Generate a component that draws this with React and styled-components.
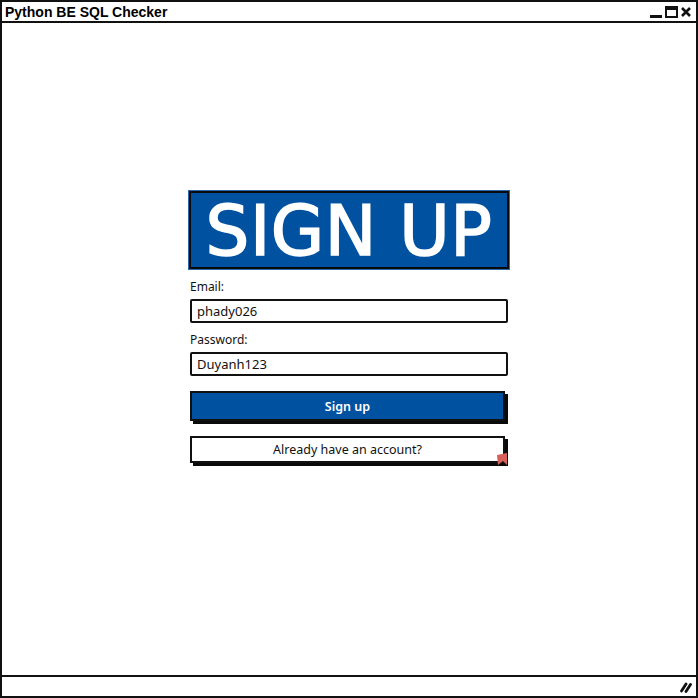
import React from "react";
import styled, { createGlobalStyle } from "styled-components";

const Global = createGlobalStyle`
  html, body {
    margin: 0;
    padding: 0;
    background: #fff;
  }
  * {
    box-sizing: border-box;
  }
`;

const Window = styled.div`
  width: 698px;
  height: 698px;
  border: 2px solid #111;
  display: flex;
  flex-direction: column;
  background: #fff;
`;

const TitleBar = styled.div`
  height: 21px;
  border-bottom: 2px solid #111;
  display: flex;
  align-items: center;
  justify-content: space-between;
  padding: 0 5px 0 3px;
  font-family: "Liberation Sans", Arial, sans-serif;
  font-weight: bold;
  font-size: 14px;
  color: #000;
`;

const Controls = styled.div`
  display: flex;
  align-items: center;
  gap: 3px;
  margin-top: 1px;
`;

const Content = styled.div`
  flex: 1;
  display: flex;
  flex-direction: column;
  align-items: center;
  padding-top: 168px;
`;

const Form = styled.div`
  width: 320px;
  display: flex;
  flex-direction: column;
  font-family: "Noto Sans", "Open Sans", sans-serif;
`;

const Banner = styled.div`
  height: 78px;
  background: #0052a0;
  border: 2px solid #0a0a0a;
  box-shadow: 0 0 0 1px #2a6ab0;
  display: flex;
  align-items: center;
  justify-content: center;
  color: #fff;
  font-family: "DejaVu Sans", sans-serif;
  font-size: 69px;
  letter-spacing: 0.5px;
  -webkit-text-stroke: 1.6px #fff;
  padding-top: 2px;
`;

const Label = styled.div`
  font-size: 12px;
  color: #111;
  height: 16px;
  line-height: 16px;
  margin: ${(p) => p.$top}px 0 4px 1px;
`;

const Field = styled.div`
  height: 24px;
  margin-left: 1px;
  margin-right: 1px;
  border: 2px solid #111;
  border-radius: 2px;
  display: flex;
  align-items: center;
  padding-left: 5px;
  font-size: 13px;
  color: #111;
`;

const Button = styled.div`
  position: relative;
  height: ${(p) => p.$h}px;
  margin: ${(p) => p.$top}px 4px 0 1px;
  border: 2px solid #111;
  background: ${(p) => (p.$primary ? "#0052a0" : "#fff")};
  color: ${(p) => (p.$primary ? "#fff" : "#111")};
  box-shadow: 3px 3px 0 #0a0a0a;
  display: flex;
  align-items: center;
  justify-content: center;
  font-size: 12.5px;
  font-weight: ${(p) => (p.$primary ? 600 : 400)};
`;

const LinkMark = styled.svg`
  position: absolute;
  right: -5px;
  bottom: -5px;
`;

const StatusBar = styled.div`
  height: 21px;
  border-top: 2px solid #111;
  display: flex;
  align-items: center;
  justify-content: flex-end;
  padding-right: 4px;
`;

export default function App() {
  return (
    <>
      <Global />
      <Window>
        <TitleBar>
          <span>Python BE SQL Checker</span>
          <Controls>
            <svg width="12" height="12" viewBox="0 0 12 12">
              <rect x="0" y="9" width="12" height="3" fill="#111" />
            </svg>
            <svg width="13" height="12" viewBox="0 0 13 12">
              <rect x="1" y="1" width="11" height="10" fill="none" stroke="#111" strokeWidth="2" />
              <rect x="1" y="1" width="11" height="3" fill="#111" />
            </svg>
            <svg width="10" height="10" viewBox="0 0 10 10">
              <path d="M1 1 L9 9 M9 1 L1 9" stroke="#111" strokeWidth="2.6" />
            </svg>
          </Controls>
        </TitleBar>
        <Content>
          <Form>
            <Banner>SIGN UP</Banner>
            <Label $top={10}>Email:</Label>
            <Field>phady026</Field>
            <Label $top={9}>Password:</Label>
            <Field>Duyanh123</Field>
            <Button $primary $h={30} $top={15}>
              Sign up
            </Button>
            <Button $h={27} $top={15}>
              Already have an account?
              <LinkMark width="12" height="13" viewBox="0 0 12 13">
                <path d="M1 2 L11 0 L11 12 L7 8 L2 12 Z" fill="#d9605a" />
              </LinkMark>
            </Button>
          </Form>
        </Content>
        <StatusBar>
          <svg width="12" height="12" viewBox="0 0 12 12">
            <path d="M1.5 10 L6 3 M6 10.5 L10.5 3.5" stroke="#111" strokeWidth="2.8" strokeLinecap="round" />
          </svg>
        </StatusBar>
      </Window>
    </>
  );
}
